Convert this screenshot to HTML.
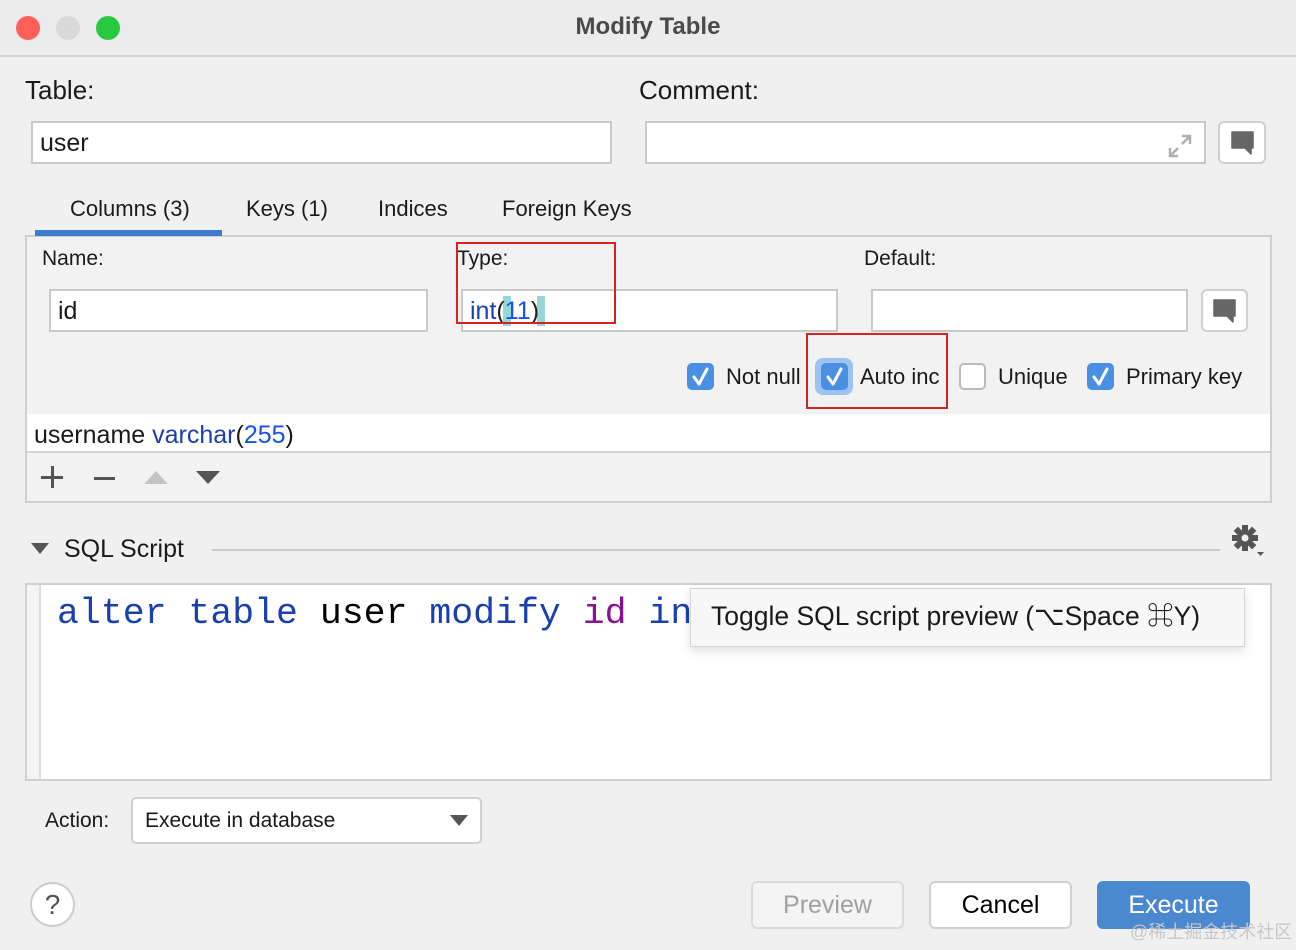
<!DOCTYPE html>
<html><head><meta charset="utf-8"><style>
*{margin:0;padding:0;box-sizing:border-box}
body{width:1296px;height:950px;background:#f0f0f0;font-family:"Liberation Sans","Noto Sans CJK SC",sans-serif;color:#1a1a1a;position:relative;overflow:hidden}
.a{position:absolute}
.t{font-size:23px;white-space:nowrap;line-height:1}
.inp{position:absolute;background:#fff;border:2px solid #c9c9c9}
.btn{position:absolute;background:#fff;border:2px solid #d0d0d0;border-radius:6px}
.cb{position:absolute;width:27px;height:27px;border-radius:5px;background:#4a90e2}
.cb svg{position:absolute;left:0;top:0}
.red{position:absolute;border:2px solid #d42323}
</style></head><body>
<div class="a" style="left:0;top:0;width:1296px;height:57px;background:#ececec;border-bottom:2px solid #d4d4d4"></div>
<div class="a" style="left:16px;top:16px;width:24px;height:24px;border-radius:50%;background:#fe5f57"></div>
<div class="a" style="left:56px;top:16px;width:24px;height:24px;border-radius:50%;background:#d8d8d8"></div>
<div class="a" style="left:96px;top:16px;width:24px;height:24px;border-radius:50%;background:#28c840"></div>
<div class="a t" style="left:0;width:1296px;text-align:center;top:15px;font-weight:bold;font-size:24px;color:#4a4a4a">Modify Table</div>

<div class="a t" style="left:25px;top:77px;font-size:26px">Table:</div>
<div class="a t" style="left:639px;top:77px;font-size:26px">Comment:</div>
<div class="inp" style="left:31px;top:121px;width:581px;height:43px"></div>
<div class="a t" style="left:40px;top:131px;font-size:25px">user</div>
<div class="inp" style="left:645px;top:121px;width:561px;height:43px"></div>
<svg class="a" style="left:1166px;top:132px" width="28" height="28" viewBox="0 0 28 28"><path d="M16 4h8v8M24 4l-8 8M12 24H4v-8M4 24l8-8" stroke="#b0b0b0" stroke-width="2.5" fill="none"/></svg>
<div class="btn" style="left:1218px;top:121px;width:48px;height:43px"></div>
<svg class="a" style="left:1229px;top:130px" width="27" height="26"><path d="M3 2h21v16h-2v6l-6-6H3z" fill="#666" stroke="#666" stroke-linejoin="round" stroke-width="1.5"/></svg>

<div class="a t" style="left:70px;top:198px;font-size:22px">Columns (3)</div>
<div class="a t" style="left:246px;top:198px;font-size:22px">Keys (1)</div>
<div class="a t" style="left:378px;top:198px;font-size:22px">Indices</div>
<div class="a t" style="left:502px;top:198px;font-size:22px">Foreign Keys</div>

<div class="a" style="left:25px;top:235px;width:1247px;height:268px;border:2px solid #cfcfcf;background:#f2f2f2"></div>
<div class="a" style="left:35px;top:230px;width:187px;height:6px;background:#3d7dd0"></div>

<div class="a t" style="left:42px;top:248px;font-size:21px">Name:</div>
<div class="a t" style="left:457px;top:248px;font-size:21px">Type:</div>
<div class="a t" style="left:864px;top:248px;font-size:21px">Default:</div>
<div class="inp" style="left:49px;top:289px;width:379px;height:43px"></div>
<div class="a t" style="left:58px;top:299px;font-size:25px">id</div>
<div class="inp" style="left:461px;top:289px;width:377px;height:43px"></div>
<div class="a" style="left:503px;top:296px;width:8px;height:30px;background:#96d8d8"></div>
<div class="a" style="left:537px;top:296px;width:8px;height:30px;background:#96d8d8"></div>
<div class="a t" style="left:470px;top:299px;font-size:25px;color:#1a3fb0">int<span style="color:#222">(</span><span style="color:#1750eb">11</span><span style="color:#222">)</span></div>
<div class="inp" style="left:871px;top:289px;width:317px;height:43px"></div>
<div class="btn" style="left:1201px;top:289px;width:47px;height:43px"></div>
<svg class="a" style="left:1211px;top:298px" width="27" height="26"><path d="M3 2h21v16h-2v6l-6-6H3z" fill="#666" stroke="#666" stroke-linejoin="round" stroke-width="1.5"/></svg>

<div class="cb" style="left:687px;top:363px"><svg width="27" height="27"><path d="M7 14l5 7l8-15" stroke="#fff" stroke-width="3" fill="none" stroke-linecap="round" stroke-linejoin="round"/></svg></div>
<div class="a t" style="left:726px;top:366px;font-size:22px">Not null</div>
<div class="a" style="left:815px;top:358px;width:38px;height:37px;border-radius:8px;background:#9cc3f2"></div>
<div class="cb" style="left:821px;top:363px"><svg width="27" height="27"><path d="M7 14l5 7l8-15" stroke="#fff" stroke-width="3" fill="none" stroke-linecap="round" stroke-linejoin="round"/></svg></div>
<div class="a t" style="left:860px;top:366px;font-size:22px">Auto inc</div>
<div class="a" style="left:959px;top:363px;width:27px;height:27px;border-radius:5px;background:#fff;border:2px solid #bbb"></div>
<div class="a t" style="left:998px;top:366px;font-size:22px">Unique</div>
<div class="cb" style="left:1087px;top:363px"><svg width="27" height="27"><path d="M7 14l5 7l8-15" stroke="#fff" stroke-width="3" fill="none" stroke-linecap="round" stroke-linejoin="round"/></svg></div>
<div class="a t" style="left:1126px;top:366px;font-size:22px">Primary key</div>

<div class="red" style="left:456px;top:242px;width:160px;height:82px"></div>
<div class="red" style="left:806px;top:333px;width:142px;height:76px"></div>

<div class="a" style="left:27px;top:414px;width:1243px;height:39px;background:#fff;border-bottom:2px solid #d4d4d4"></div>
<div class="a t" style="left:34px;top:423px;font-size:25px">username <span style="color:#1a3fb0">varchar</span>(<span style="color:#1750eb">255</span>)</div>
<div class="a" style="left:41px;top:476px;width:22px;height:3px;background:#555"></div>
<div class="a" style="left:51px;top:466px;width:3px;height:22px;background:#555"></div>
<div class="a" style="left:94px;top:477px;width:21px;height:3px;background:#555"></div>
<svg class="a" style="left:144px;top:470px" width="24" height="14"><path d="M0 14L12 1L24 14z" fill="#c4c4c4"/></svg>
<svg class="a" style="left:196px;top:471px" width="24" height="14"><path d="M0 0L12 13L24 0z" fill="#555"/></svg>

<svg class="a" style="left:31px;top:543px" width="18" height="12"><path d="M0 0L9 11L18 0z" fill="#555"/></svg>
<div class="a t" style="left:64px;top:537px;font-size:25px">SQL Script</div>
<div class="a" style="left:212px;top:549px;width:1008px;height:2px;background:#ccc"></div>
<svg class="a" style="left:1232px;top:525px" width="34" height="34" viewBox="0 0 34 34"><g transform="translate(13 13)" fill="#555"><circle r="8"/><g id="g"><rect x="-3" y="-13" width="6" height="26"/><rect x="-13" y="-3" width="26" height="6"/></g><use href="#g" transform="rotate(45)"/></g><circle cx="13" cy="13" r="3.5" fill="#f0f0f0"/><path d="M25 27h7l-3.5 4z" fill="#555"/></svg>

<div class="a" style="left:25px;top:583px;width:1247px;height:198px;background:#fff;border:2px solid #d0d0d0"></div>
<div class="a" style="left:27px;top:585px;width:14px;height:194px;background:#f4f4f4;border-right:2px solid #ddd"></div>
<div class="a" style="left:57px;top:594px;font-family:'Liberation Mono',monospace;font-size:36.5px;line-height:40px;white-space:pre;color:#000"><span style="color:#1a3fb0">alter table</span> user <span style="color:#1a3fb0">modify</span> <span style="color:#871094">id</span> <span style="color:#1a3fb0">in</span></div>

<div class="a" style="left:690px;top:588px;width:555px;height:59px;background:#f7f7f7;border:1px solid #d6d6d6;box-shadow:0 4px 10px rgba(0,0,0,.12)"></div>
<div class="a t" style="left:711px;top:603px;font-size:26.5px">Toggle SQL script preview (⌥Space ⌘Y)</div>

<div class="a t" style="left:45px;top:810px;font-size:21px">Action:</div>
<div class="btn" style="left:131px;top:797px;width:351px;height:47px;border-radius:5px"></div>
<div class="a t" style="left:145px;top:810px;font-size:21px">Execute in database</div>
<svg class="a" style="left:450px;top:815px" width="18" height="12"><path d="M0 0L9 11L18 0z" fill="#555"/></svg>

<div class="a" style="left:30px;top:882px;width:45px;height:45px;border-radius:50%;background:#fff;border:2px solid #ccc;font-size:28px;text-align:center;line-height:41px;color:#555">?</div>
<div class="btn" style="left:751px;top:881px;width:153px;height:48px;background:#f4f4f4;border-color:#dadada"></div>
<div class="a t" style="left:751px;width:153px;text-align:center;top:893px;font-size:25px;color:#a0a0a0">Preview</div>
<div class="btn" style="left:929px;top:881px;width:143px;height:48px"></div>
<div class="a t" style="left:929px;width:143px;text-align:center;top:893px;font-size:25px;color:#000">Cancel</div>
<div class="a" style="left:1097px;top:881px;width:153px;height:48px;border-radius:6px;background:#4a88d0"></div>
<div class="a t" style="left:1097px;width:153px;text-align:center;top:893px;font-size:25px;color:#fff">Execute</div>
<div class="a t" style="left:1130px;top:923px;font-size:18px;color:#c8c8c8">@稀土掘金技术社区</div>
</body></html>
